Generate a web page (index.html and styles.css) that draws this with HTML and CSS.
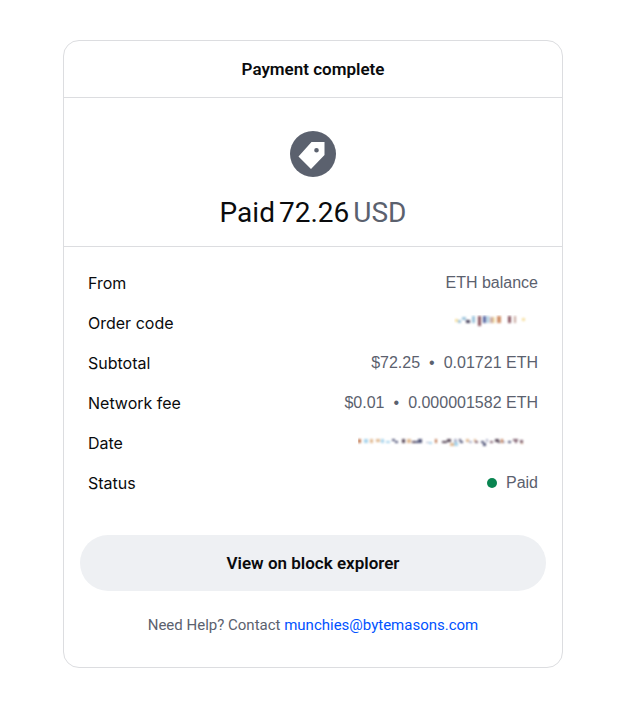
FILE: index.html
```html
<!DOCTYPE html>
<html lang="en">
<head>
  <meta charset="UTF-8">
  <meta name="viewport" content="width=device-width, initial-scale=1.0">
  <title>Payment complete</title>
  <link rel="stylesheet" href="styles.css">
</head>
<body>
  <main class="card">
    <header class="card-header">
      <h1>Payment complete</h1>
    </header>

    <section class="summary">
      <svg class="tag-icon" viewBox="0 0 46 46" aria-hidden="true">
        <circle cx="23" cy="23" r="23" fill="#5b616e"/>
        <path fill="#fff" fill-rule="evenodd" d="M21.500 11H34.500V24L21 38L8.500 25.500ZM26.500 17A2.300 2.300 0 1 0 26.500 21.600A2.300 2.300 0 1 0 26.500 17Z"/>
      </svg>
      <p class="amount">
        <span>Paid</span>
        <span>72.26</span>
        <span class="currency">USD</span>
      </p>
    </section>

    <dl class="details">
      <div class="row">
        <dt>From</dt>
        <dd>ETH balance</dd>
      </div>
      <div class="row">
        <dt>Order code</dt>
        <dd>
          <svg class="redacted" width="84" height="16" viewBox="0 0 84 16" role="img" aria-label="Hidden order code">
            <g class="smudge">
              <path fill="#f6dfa0" d="M1 4h3v3h-3zM68 3h3v3h-3zM39 2h2v6h-2z"/>
              <path fill="#9cc4dc" d="M4 5h3v3h-3zM8 2h4v3h-4zM18 1h3v7h-3zM33 1h2v7h-2z"/>
              <path fill="#45405c" d="M12 5h4v3h-4z"/>
              <path fill="#8a5560" d="M24 1h3v10h-3zM54 1h3v7h-3z"/>
              <path fill="#5464a0" d="M29 1h3v7h-3z"/>
              <path fill="#d09068" d="M43 1h4v7h-4z"/>
              <path fill="#c8a8a0" d="M36 2h3v6h-3zM60 1h2v7h-2z"/>
            </g>
          </svg>
        </dd>
      </div>
      <div class="row">
        <dt>Subtotal</dt>
        <dd>$72.25<span class="dot">•</span>0.01721 ETH</dd>
      </div>
      <div class="row">
        <dt>Network fee</dt>
        <dd>$0.01<span class="dot">•</span>0.000001582 ETH</dd>
      </div>
      <div class="row">
        <dt>Date</dt>
        <dd>
          <svg class="redacted" width="180" height="16" viewBox="0 0 180 16" role="img" aria-label="Hidden date">
            <g class="smudge">
              <path fill="#c07850" d="M0 4h3v4h-3zM77 4h2v4h-2zM143 4h2v4h-2z"/>
              <path fill="#a8d4ec" d="M6 4h4v4h-4zM23 4h3v4h-3zM28 6h4v2h-4zM96 7h4v4h-4zM71 7h3v2h-3z"/>
              <path fill="#e0b890" d="M12 4h3v4h-3zM18 4h4v3h-4zM49 4h4v4h-4zM92 8h4v3h-4zM108 4h3v3h-3zM116 4h2v3h-2zM163 7h2v2h-2z"/>
              <path fill="#505478" d="M34 4h3v2h-3zM37 6h3v2h-3zM57 6h3v2h-3zM60 4h4v4h-4zM101 4h2v2h-2zM102 6h3v2h-3zM123 6h3v2h-3zM125 8h3v3h-3zM150 6h3v2h-3z"/>
              <path fill="#584858" d="M44 4h3v4h-3zM54 6h3v2h-3zM84 6h5v2h-5zM89 4h4v3h-4zM137 4h4v3h-4zM140 6h2v2h-2z"/>
              <path fill="#b0b4cc" d="M68 7h3v1h-3zM96 4h3v3h-3zM111 6h3v2h-3zM128 4h2v3h-2zM145 6h2v2h-2z"/>
              <path fill="#806070" d="M132 6h3v2h-3zM117 6h3v2h-3zM155 4h5v2h-5zM157 6h2v2h-2zM162 5h3v3h-3z"/>
            </g>
          </svg>
        </dd>
      </div>
      <div class="row">
        <dt>Status</dt>
        <dd class="status">Paid</dd>
      </div>
    </dl>

    <footer class="card-footer">
      <button type="button" class="explorer-btn">View on block explorer</button>
      <p class="help">Need Help? Contact <a href="mailto:munchies@bytemasons.com">munchies@bytemasons.com</a></p>
    </footer>
  </main>
</body>
</html>
```
FILE: styles.css
```css
* {
  margin: 0;
  padding: 0;
  box-sizing: border-box;
}

body {
  font-family: Inter, "Liberation Sans", sans-serif;
  font-size: 16px;
  line-height: 24px;
  color: #0a0b0d;
  background: #fff;
  padding: 40px 15px 36px 18px;
}

.card {
  max-width: 500px;
  margin: 0 auto;
  border: 1px solid #dcdde0;
  border-radius: 16px;
}

.card-header {
  padding: 16px;
  text-align: center;
  border-bottom: 1px solid #dcdde0;
}

.card-header h1 {
  font-family: Roboto, sans-serif;
  font-size: 17px;
  line-height: 24px;
  font-weight: 600;
}

.summary {
  padding: 33px 16px 15px;
  border-bottom: 1px solid #dcdde0;
}

.tag-icon {
  display: block;
  width: 46px;
  height: 46px;
  margin: 0 auto 18px;
}

.amount {
  display: flex;
  justify-content: center;
  gap: 4px;
  font-family: Roboto, sans-serif;
  font-size: 28px;
  line-height: 36px;
}

.currency {
  color: #5b616e;
}

.details {
  padding: 16px 24px;
}

.row {
  display: flex;
  justify-content: space-between;
  align-items: center;
  height: 40px;
}

.row dd {
  font-family: "Liberation Sans", Arial, sans-serif;
  color: #5b616e;
}

.dot {
  margin: 0 9px;
}

.redacted {
  display: block;
}

.smudge {
  filter: blur(1px);
}

.status {
  display: flex;
  align-items: center;
  gap: 9px;
}

.status::before {
  content: "";
  width: 10px;
  height: 10px;
  border-radius: 50%;
  background: #098551;
}

.card-footer {
  padding: 16px 16px 30px;
  text-align: center;
}

.explorer-btn {
  width: 100%;
  height: 56px;
  border: none;
  border-radius: 28px;
  background: #eef0f3;
  color: #0a0b0d;
  font-family: Roboto, sans-serif;
  font-size: 17px;
  font-weight: 600;
  cursor: pointer;
}

.help {
  margin-top: 22px;
  font-family: Roboto, sans-serif;
  font-size: 15px;
  color: #5b616e;
}

.help a {
  color: #0052ff;
  text-decoration: none;
}
```
